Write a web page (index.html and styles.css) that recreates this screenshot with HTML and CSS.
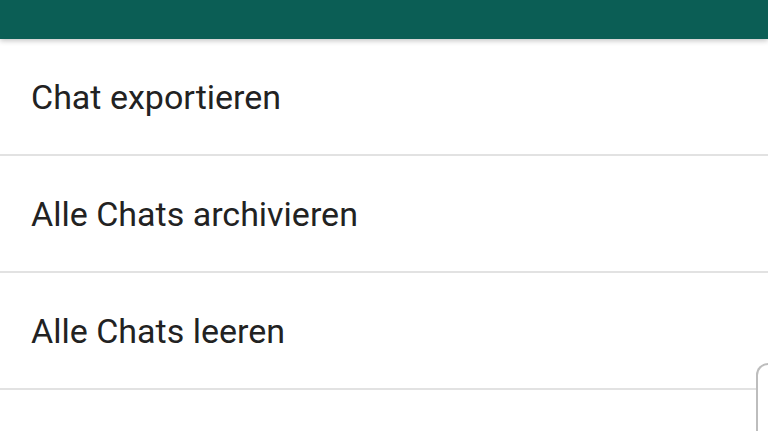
FILE: index.html
```html
<!DOCTYPE html>
<html lang="de">
<head>
    <meta charset="UTF-8">
    <meta name="viewport" content="width=device-width, initial-scale=1.0">
    <title>Mehr</title>
    <link rel="stylesheet" href="styles.css">
</head>
<body>
    <div class="toolbar"></div>
    <ul class="menu-list">
        <li class="menu-item">Chat exportieren</li>
        <li class="menu-item">Alle Chats archivieren</li>
        <li class="menu-item">Alle Chats leeren</li>
        <li class="menu-item menu-item-last"></li>
    </ul>
    <div class="edge-card"></div>
</body>
</html>
```

FILE: styles.css
```css
body {
    font-family: Roboto, "Noto Sans", sans-serif;
    margin: 0;
    background-color: #ffffff;
    overflow: hidden;
    height: 432px;
    position: relative;
}
.toolbar {
    height: 39px;
    background-color: #0b5e55;
    box-shadow: 0 2px 5px rgba(0, 0, 0, 0.22);
    position: relative;
    z-index: 1;
}
.menu-list {
    list-style: none;
    margin: 0;
    padding: 0;
}
.menu-item {
    box-sizing: border-box;
    height: 117px;
    display: flex;
    align-items: center;
    padding: 1px 0 0 31px;
    font-size: 34px;
    color: #222222;
    border-bottom: 2px solid #e2e2e2;
}
.menu-item-last {
    height: 42px;
    border-bottom: none;
}
.edge-card {
    position: absolute;
    left: 756px;
    top: 363px;
    width: 40px;
    height: 66px;
    border: 2px solid #bdbdbd;
    border-bottom: none;
    border-radius: 12px 12px 0 0;
    background-color: #ffffff;
}
```
